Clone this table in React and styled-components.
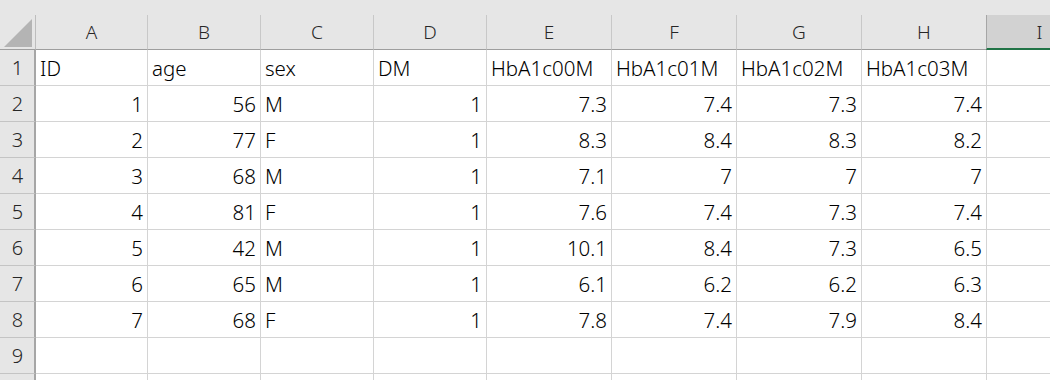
import styled, { createGlobalStyle } from 'styled-components';

const GlobalStyle = createGlobalStyle`
  html, body {
    margin: 0;
    padding: 0;
    background: #ffffff;
    font-family: "Noto Sans", "Noto Sans CJK JP", sans-serif;
  }
`

const COLS = ['A', 'B', 'C', 'D', 'E', 'F', 'G', 'H', 'I'];
const WIDTHS = [112, 113, 113, 113, 125, 125, 125, 125, 106];

const header = ['ID', 'age', 'sex', 'DM', 'HbA1c00M', 'HbA1c01M', 'HbA1c02M', 'HbA1c03M'];
const rows = [
    [1, 56, 'M', 1, 7.3, 7.4, 7.3, 7.4],
    [2, 77, 'F', 1, 8.3, 8.4, 8.3, 8.2],
    [3, 68, 'M', 1, 7.1, 7, 7, 7],
    [4, 81, 'F', 1, 7.6, 7.4, 7.3, 7.4],
    [5, 42, 'M', 1, 10.1, 8.4, 7.3, 6.5],
    [6, 65, 'M', 1, 6.1, 6.2, 6.2, 6.3],
    [7, 68, 'F', 1, 7.8, 7.4, 7.9, 8.4],
];

const Sheet = styled.div`
    width: 1050px;
    height: 380px;
    overflow: hidden;
    background: #e6e6e6;
    padding-top: 15px;
    box-sizing: border-box;
`

const Grid = styled.div`
    display: grid;
    grid-template-columns: 36px ${WIDTHS.map(w => w + 'px').join(' ')};
    grid-template-rows: 35px repeat(10, 36px);
    width: max-content;
    background: #ffffff;
`

const Corner = styled.div`
    background: #e6e6e6;
    border-right: 1px solid #bdbdbd;
    border-bottom: 1px solid #9e9e9e;
    box-sizing: border-box;
    position: relative;

    svg {
        position: absolute;
        left: 4px;
        top: 4px;
    }
`

const ColHead = styled.div`
    background: ${p => p.$selected ? '#d2d2d2' : '#e6e6e6'};
    border-right: 1px solid ${p => p.$selected ? '#bdbdbd' : '#c8c8c8'};
    border-left: ${p => p.$selected ? '1px solid #a6a6a6' : 'none'};
    margin-left: ${p => p.$selected ? '-1px' : '0'};
    border-bottom: ${p => p.$selected ? '2px solid #217346' : '1px solid #9e9e9e'};
    box-sizing: border-box;
    display: flex;
    align-items: center;
    justify-content: center;
    font-size: 19px;
    font-weight: 350;
    color: #262626;
    padding-top: ${p => p.$selected ? '1px' : '0'};
`

const RowHead = styled.div`
    background: #e6e6e6;
    border-right: 2px solid #a6a6a6;
    border-bottom: 1px solid #c4c4c4;
    box-sizing: border-box;
    display: flex;
    align-items: center;
    justify-content: center;
    font-size: 20px;
    font-weight: 350;
    color: #262626;
    padding-left: 1px;
`

const Cell = styled.div`
    border-right: 1px solid #d4d4d4;
    border-bottom: 1px solid #d4d4d4;
    box-sizing: border-box;
    display: flex;
    align-items: center;
    justify-content: ${p => p.$num ? 'flex-end' : 'flex-start'};
    padding: 1px 4px 0 4px;
    font-size: 20.5px;
    font-weight: 350;
    color: #000000;
    white-space: nowrap;
    overflow: hidden;
`

const CornerTriangle = () => (
    <svg width="29" height="29" viewBox="0 0 29 29">
        <polygon points="0,28 28,28 28,0" fill="#b4b4b4" />
    </svg>
)

// label is left out for the row cut off at the bottom edge
const renderRow = (n, values, label = n) => (
    <>
        <RowHead key={'r' + n}>{label}</RowHead>
        {COLS.map((c, i) => {
            const v = values ? values[i] : undefined;
            return (
                <Cell key={c + n} $num={typeof v === 'number'}>
                    {v !== undefined ? String(v) : ''}
                </Cell>
            )
        })}
    </>
)

const App = () => {
    return (
        <Sheet>
            <GlobalStyle />
            <Grid>
                <Corner><CornerTriangle /></Corner>
                {COLS.map(c => (
                    <ColHead key={c} $selected={c === 'I'}>{c}</ColHead>
                ))}
                {renderRow(1, header)}
                {rows.map((r, i) => renderRow(i + 2, r))}
                {renderRow(9)}
                {renderRow(10, undefined, '')}
            </Grid>
        </Sheet>
    )
}

export default App;
